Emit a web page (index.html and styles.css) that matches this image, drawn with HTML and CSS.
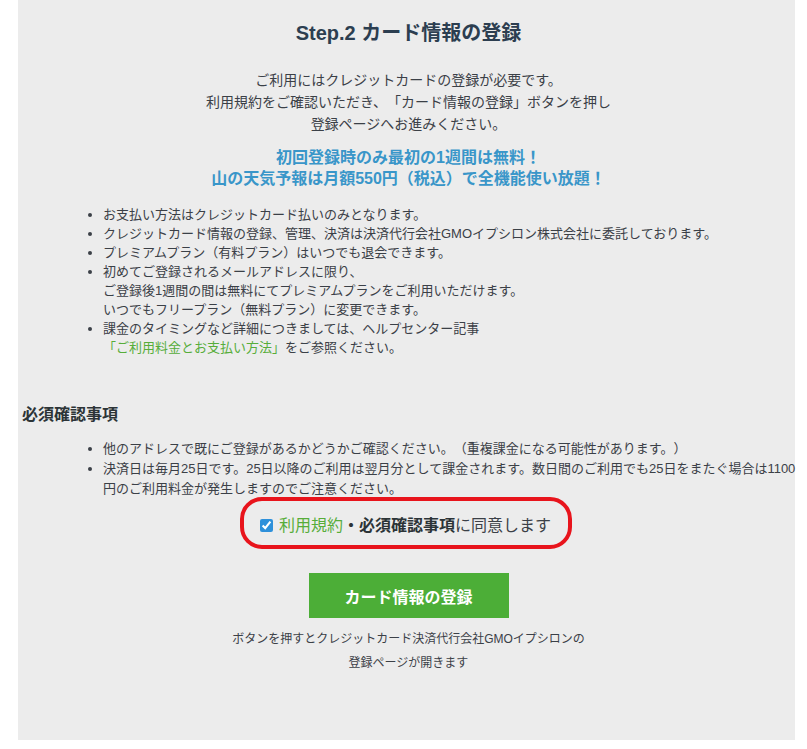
FILE: index.html
```html
<!DOCTYPE html>
<html lang="ja">
<head>
<meta charset="utf-8">
<title>Step.2 カード情報の登録</title>
<link rel="stylesheet" href="styles.css">
</head>
<body>
<main class="panel">
  <h1 class="title">Step.2 カード情報の登録</h1>
  <p class="intro">ご利用にはクレジットカードの登録が必要です。<br>利用規約をご確認いただき、「カード情報の登録」ボタンを押し<br>登録ページへお進みください。</p>
  <p class="promo">初回登録時のみ最初の1週間は無料！<br>山の天気予報は月額550円（税込）で全機能使い放題！</p>
  <ul class="notes">
    <li>お支払い方法はクレジットカード払いのみとなります。</li>
    <li>クレジットカード情報の登録、管理、決済は決済代行会社GMOイプシロン株式会社に委託しております。</li>
    <li>プレミアムプラン（有料プラン）はいつでも退会できます。</li>
    <li>初めてご登録されるメールアドレスに限り、<br>ご登録後1週間の間は無料にてプレミアムプランをご利用いただけます。<br>いつでもフリープラン（無料プラン）に変更できます。</li>
    <li>課金のタイミングなど詳細につきましては、ヘルプセンター記事<br><a class="link" href="#">「ご利用料金とお支払い方法」</a>をご参照ください。</li>
  </ul>
  <h2 class="section-title">必須確認事項</h2>
  <ul class="notes notes-required">
    <li>他のアドレスで既にご登録があるかどうかご確認ください。（重複課金になる可能性があります。）</li>
    <li>決済日は毎月25日です。25日以降のご利用は翌月分として課金されます。数日間のご利用でも25日をまたぐ場合は1100円のご利用料金が発生しますのでご注意ください。</li>
  </ul>
  <div class="agree-box">
    <label class="agree">
      <input type="checkbox" class="agree-check" checked>
      <span><a class="link" href="#">利用規約</a><strong class="strong">・必須確認事項</strong>に同意します</span>
    </label>
  </div>
  <div class="actions">
    <button type="button" class="btn">カード情報の登録</button>
  </div>
  <p class="footnote">ボタンを押すとクレジットカード決済代行会社GMOイプシロンの<br>登録ページが開きます</p>
</main>
</body>
</html>
```
FILE: styles.css
```css
html, body {
  margin: 0;
  padding: 0;
  background: #ffffff;
}
body {
  font-family: "Liberation Sans", "Noto Sans CJK JP", sans-serif;
  color: #3b4047;
  text-spacing-trim: space-all;
}
.panel {
  box-sizing: border-box;
  margin-left: 18px;
  width: 777px;
  height: 740px;
  background: #ececec;
  padding: 20px 0 0 4px;
  display: flex;
  flex-direction: column;
}
.title {
  margin: 0;
  font-size: 20px;
  line-height: 26px;
  font-weight: bold;
  color: #2c3e50;
  text-align: center;
}
.intro {
  margin: 23px 0 0;
  font-size: 14px;
  line-height: 22px;
  text-align: center;
}
.promo {
  margin: 12px 0 0;
  font-size: 16px;
  line-height: 21px;
  font-weight: bold;
  color: #3996c9;
  text-align: center;
}
.notes {
  margin: 16px 0 0;
  padding-left: 81px;
  font-size: 13px;
  line-height: 19px;
}
.notes-required {
  margin-top: 12px;
  margin-right: -8px;
  line-height: 20px;
}
.link {
  color: #57ad3a;
  text-decoration: none;
}
.section-title {
  margin: 46px 0 0;
  font-size: 16px;
  line-height: 24px;
  font-weight: bold;
  color: #2c3437;
}
.agree-box {
  box-sizing: border-box;
  align-self: center;
  width: 332px;
  height: 52px;
  margin: -2px 6px 0 0;
  border: 4px solid #e8141c;
  border-radius: 22px;
  display: flex;
  align-items: center;
  justify-content: center;
}
.agree {
  display: flex;
  align-items: center;
  gap: 6px;
  font-size: 16px;
  line-height: 24px;
  padding-top: 5px;
  color: #3b4047;
}
.agree-check {
  width: 13px;
  height: 13px;
  margin: 0;
  accent-color: #2e90da;
}
.strong {
  font-weight: bold;
  color: #2c3437;
}
.actions {
  display: flex;
  justify-content: center;
  margin-top: 24px;
}
.btn {
  width: 200px;
  height: 45px;
  border: none;
  background: #4cae37;
  color: #ffffff;
  font-family: inherit;
  font-size: 16px;
  font-weight: bold;
  cursor: pointer;
}
.footnote {
  margin: 9px 0 0;
  font-size: 12px;
  line-height: 24px;
  text-align: center;
}
```
